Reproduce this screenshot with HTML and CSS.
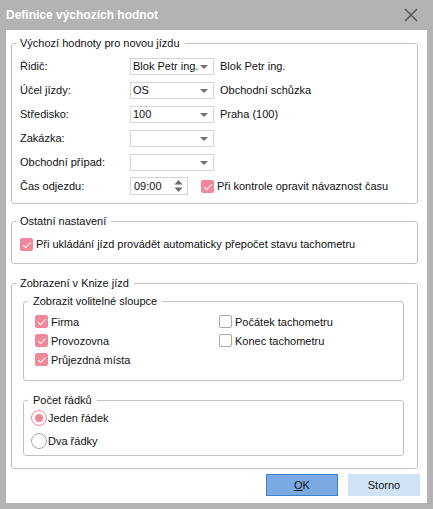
FILE: index.html
```html
<!DOCTYPE html>
<html lang="cs">
<head>
<meta charset="utf-8">
<title>Definice výchozích hodnot</title>
<link rel="stylesheet" href="styles.css">
</head>
<body>
<div class="window">
  <div class="titlebar">
    <span class="title">Definice výchozích hodnot</span>
    <svg class="close" width="14" height="14" viewBox="0 0 14 14"><path d="M1 1 L13 13 M13 1 L1 13" stroke="#5a5a5a" stroke-width="1.6" fill="none"/></svg>
  </div>
  <div class="client">
    <fieldset class="group g1">
      <legend>Výchozí hodnoty pro novou jízdu</legend>
      <div class="form-grid">
        <span class="lbl">Řidič:</span>
        <span class="combo">Blok Petr ing.<i class="arrow"></i></span>
        <span class="val">Blok Petr ing.</span>

        <span class="lbl">Účel jízdy:</span>
        <span class="combo">OS<i class="arrow"></i></span>
        <span class="val">Obchodní schůzka</span>

        <span class="lbl">Středisko:</span>
        <span class="combo">100<i class="arrow"></i></span>
        <span class="val">Praha (100)</span>

        <span class="lbl">Zakázka:</span>
        <span class="combo"><i class="arrow"></i></span>
        <span class="val"></span>

        <span class="lbl">Obchodní případ:</span>
        <span class="combo"><i class="arrow"></i></span>
        <span class="val"></span>

        <span class="lbl">Čas odjezdu:</span>
        <span class="time-row">
          <span class="time">09:00
            <svg class="spin" width="9" height="14" viewBox="0 0 9 14"><path d="M0.5 5.5 L4.5 1 L8.5 5.5 Z M0.5 8.5 L4.5 13 L8.5 8.5 Z" fill="#6b6b6b"/></svg>
          </span>
          <span class="check-line time-check"><span class="cb on"></span>Při kontrole opravit návaznost času</span>
        </span>
      </div>
    </fieldset>

    <fieldset class="group g2">
      <legend>Ostatní nastavení</legend>
      <div class="check-line"><span class="cb on"></span>Při ukládání jízd provádět automaticky přepočet stavu tachometru</div>
    </fieldset>

    <fieldset class="group g3">
      <legend>Zobrazení v Knize jízd</legend>
      <fieldset class="group inner cols">
        <legend>Zobrazit volitelné sloupce</legend>
        <div class="col-grid">
          <div class="check-line"><span class="cb on"></span>Firma</div>
          <div class="check-line"><span class="cb"></span>Počátek tachometru</div>
          <div class="check-line"><span class="cb on"></span>Provozovna</div>
          <div class="check-line"><span class="cb"></span>Konec tachometru</div>
          <div class="check-line"><span class="cb on"></span>Průjezdná místa</div>
        </div>
      </fieldset>
      <fieldset class="group inner rows">
        <legend>Počet řádků</legend>
        <div class="radio-line"><span class="rb on"></span>Jeden řádek</div>
        <div class="radio-line"><span class="rb"></span>Dva řádky</div>
      </fieldset>
    </fieldset>

    <div class="buttons">
      <button class="btn primary"><u>O</u>K</button>
      <button class="btn">Storno</button>
    </div>
  </div>
</div>
</body>
</html>
```
FILE: styles.css
```css
* { box-sizing: border-box; }
html, body { margin: 0; padding: 0; background: #b3b3b3; }
body {
  font-family: "Liberation Sans", Arial, sans-serif;
  font-size: 11px;
  color: #111;
}
.window {
  width: 433px;
  height: 509px;
  background: #b3b3b3;
  padding: 0 6px 6px;
  display: flex;
  flex-direction: column;
}
.titlebar {
  height: 30px;
  display: flex;
  align-items: center;
  justify-content: space-between;
  padding-right: 9px;
}
.title {
  color: #fff;
  font-weight: bold;
  font-size: 12px;
}
.close { display: block; }
.client {
  flex: 1;
  background: #fff;
  padding: 6px 9px 6px 5px;
  display: flex;
  flex-direction: column;
}
.group {
  margin: 0;
  border: 1px solid #c2c2c2;
  border-radius: 3px;
  padding: 0 8px;
  min-width: 0;
}
.group legend {
  padding: 0 5px 0 4px;
  margin-left: -4px;
  line-height: 15px;
  font-size: 11px;
}
.g1 { padding-top: 3px; padding-bottom: 5px; }
.form-grid {
  display: grid;
  grid-template-columns: 110px 84px auto;
  grid-auto-rows: 24px;
  align-items: center;
  column-gap: 0;
}
.val { padding-left: 6px; }
.combo {
  position: relative;
  height: 17px;
  border: 1px solid #d6d6d6;
  padding-left: 2px;
  line-height: 15px;
  overflow: hidden;
  white-space: nowrap;
}
.arrow {
  position: absolute;
  right: 5px;
  top: 6px;
  width: 0;
  height: 0;
  border-left: 4px solid transparent;
  border-right: 4px solid transparent;
  border-top: 4px solid #6e6e6e;
}
.time-row {
  grid-column: 2 / span 2;
  display: flex;
  align-items: center;
}
.time {
  width: 58px;
  height: 18px;
  border: 1px solid #d6d6d6;
  display: flex;
  align-items: center;
  justify-content: space-between;
  padding: 0 4px 0 3px;
}
.spin { display: block; }
.time-check { margin-left: 13px; }
.check-line {
  display: flex;
  align-items: center;
  white-space: nowrap;
}
.cb {
  width: 13px;
  height: 13px;
  border: 1px solid #a9a9a9;
  border-radius: 2px;
  margin-right: 3px;
  flex: none;
  position: relative;
  background: #fff;
}
.cb.on {
  background: #f0879a;
  border-color: #f0879a;
}
.cb.on::after {
  content: "";
  position: absolute;
  left: 4px;
  top: 1px;
  width: 3px;
  height: 7px;
  border: solid #fff;
  border-width: 0 1.5px 1.5px 0;
  transform: rotate(45deg);
}
.g2 { margin-top: 10px; padding-top: 5px; padding-bottom: 9px; }
.g2 .check-line { height: 20px; }
.g3 { margin-top: 12px; padding-bottom: 12px; }
.inner {
  margin: 3px 5px 0 3px;
}
.inner legend { margin-left: -7px; padding-left: 5px; }
.cols { padding: 3px 11px 11px; }
.col-grid {
  display: grid;
  grid-template-columns: 184px auto;
  grid-auto-rows: 19px;
  align-items: center;
}
.rows {
  margin-top: 12px;
  padding: 0 7px 4px;
  display: flex;
  flex-direction: column;
  gap: 3px;
}
.rows legend { margin-left: -3px; }
.radio-line {
  height: 20px;
  display: flex;
  align-items: center;
}
.rb {
  width: 16px;
  height: 16px;
  border-radius: 50%;
  border: 1px solid #a9a9a9;
  margin-right: 1px;
  position: relative;
  flex: none;
}
.rb.on { border-color: #f0879a; }
.rb.on::after {
  content: "";
  position: absolute;
  left: 3px;
  top: 3px;
  width: 8px;
  height: 8px;
  border-radius: 50%;
  background: #f0879a;
}
.buttons {
  margin-top: 5px;
  display: flex;
  justify-content: flex-end;
  gap: 10px;
  margin-right: -2px;
}
.btn {
  width: 72px;
  height: 22px;
  font: inherit;
  color: #111;
  background: #d0e2f4;
  border: 1px solid #d0e2f4;
  padding: 0;
}
.btn.primary {
  background: #7aaae1;
  border-color: #3f7fd0;
}
```
